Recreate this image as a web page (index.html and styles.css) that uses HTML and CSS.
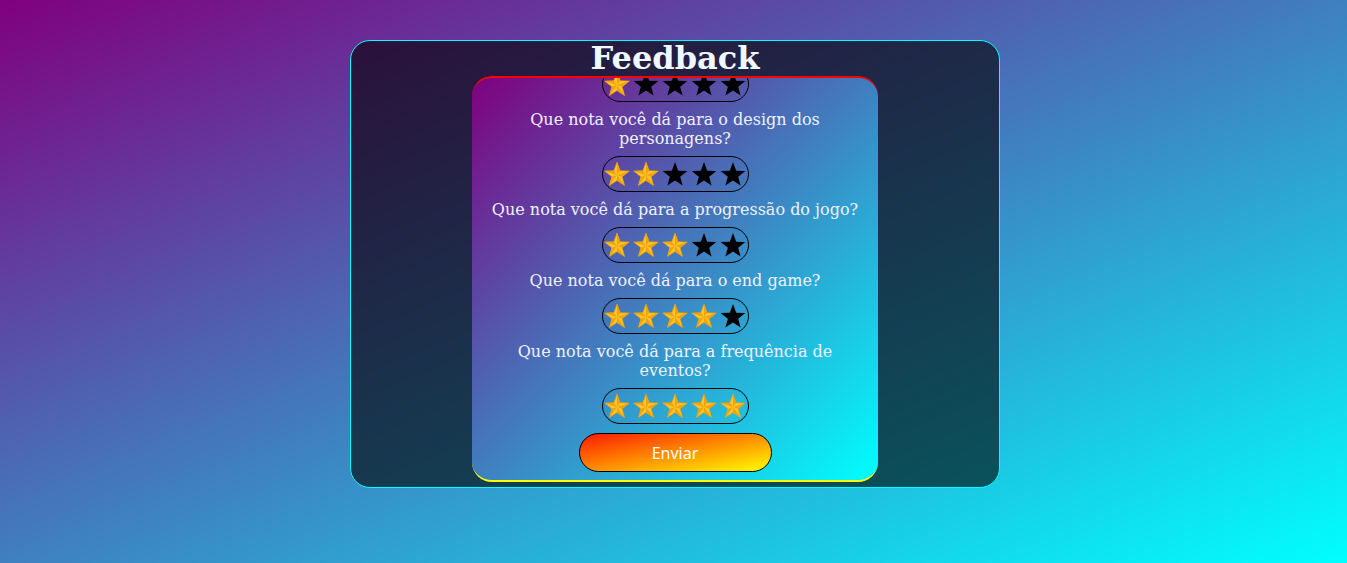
FILE: index.html
```html
<!DOCTYPE html>
<html lang="pt-BR">
<head>
<meta charset="utf-8">
<title>Feedback</title>
<link rel="stylesheet" href="styles.css">
</head>
<body>
<svg class="defs" width="0" height="0" aria-hidden="true">
  <defs>
    <symbol id="gold" viewBox="0 0 24 24">
      <polygon points="12,1 14.94,8.95 23.41,9.29 16.76,14.55 19.05,22.71 12,18 4.95,22.71 7.24,14.55 0.59,9.29 9.06,8.95" fill="#ffc62b" stroke="#e89a00" stroke-width="0.6" stroke-linejoin="round"/>
      <g fill="#f2a30c">
        <polygon points="12,13 12,1 14.94,8.95"/>
        <polygon points="12,13 23.41,9.29 16.76,14.55"/>
        <polygon points="12,13 19.05,22.71 12,18"/>
        <polygon points="12,13 4.95,22.71 7.24,14.55"/>
        <polygon points="12,13 0.59,9.29 9.06,8.95"/>
      </g>
    </symbol>
    <symbol id="dark" viewBox="0 0 24 24">
      <polygon points="12,1 14.94,8.95 23.41,9.29 16.76,14.55 19.05,22.71 12,18 4.95,22.71 7.24,14.55 0.59,9.29 9.06,8.95" fill="#000"/>
    </symbol>
  </defs>
</svg>
<main class="panel">
  <h1 class="title">Feedback</h1>
  <form class="card">
    <div class="rating">
      <svg class="star"><use href="#gold"/></svg>
      <svg class="star"><use href="#dark"/></svg>
      <svg class="star"><use href="#dark"/></svg>
      <svg class="star"><use href="#dark"/></svg>
      <svg class="star"><use href="#dark"/></svg>
    </div>
    <p class="question">Que nota você dá para o design dos personagens?</p>
    <div class="rating">
      <svg class="star"><use href="#gold"/></svg>
      <svg class="star"><use href="#gold"/></svg>
      <svg class="star"><use href="#dark"/></svg>
      <svg class="star"><use href="#dark"/></svg>
      <svg class="star"><use href="#dark"/></svg>
    </div>
    <p class="question">Que nota você dá para a progressão do jogo?</p>
    <div class="rating">
      <svg class="star"><use href="#gold"/></svg>
      <svg class="star"><use href="#gold"/></svg>
      <svg class="star"><use href="#gold"/></svg>
      <svg class="star"><use href="#dark"/></svg>
      <svg class="star"><use href="#dark"/></svg>
    </div>
    <p class="question">Que nota você dá para o end game?</p>
    <div class="rating">
      <svg class="star"><use href="#gold"/></svg>
      <svg class="star"><use href="#gold"/></svg>
      <svg class="star"><use href="#gold"/></svg>
      <svg class="star"><use href="#gold"/></svg>
      <svg class="star"><use href="#dark"/></svg>
    </div>
    <p class="question">Que nota você dá para a frequência de eventos?</p>
    <div class="rating">
      <svg class="star"><use href="#gold"/></svg>
      <svg class="star"><use href="#gold"/></svg>
      <svg class="star"><use href="#gold"/></svg>
      <svg class="star"><use href="#gold"/></svg>
      <svg class="star"><use href="#gold"/></svg>
    </div>
    <button type="button" class="send">Enviar</button>
  </form>
</main>
</body>
</html>
```
FILE: styles.css
```css
html, body {
  height: 100%;
}
body {
  margin: 0;
  box-sizing: border-box;
  padding: 40px 0 0 3px;
  background: linear-gradient(to bottom right, #800080, #00ffff);
  font-family: "DejaVu Serif", serif;
  overflow: hidden;
}
.defs {
  position: absolute;
  width: 0;
  height: 0;
}
.panel {
  width: 650px;
  height: 448px;
  box-sizing: border-box;
  margin: 0 auto;
  border: 1px solid #00ffff;
  border-radius: 20px;
  background: rgba(0, 0, 0, 0.6);
  display: flex;
  flex-direction: column;
  align-items: center;
}
.title {
  margin: 0;
  font: bold 32px/35px "DejaVu Serif", serif;
  color: #f0f8ff;
}
.card {
  width: 406px;
  height: 406px;
  box-sizing: border-box;
  border-top: 2px solid #ff0000;
  border-bottom: 2px solid #ffff00;
  border-radius: 20px;
  background: linear-gradient(to bottom right, #800080, #00ffff);
  display: flex;
  flex-direction: column;
  align-items: center;
  justify-content: flex-end;
  gap: 8px;
  padding: 0 15px 8px;
  overflow: hidden;
}
.question {
  margin: 0;
  font: 16px/19px "DejaVu Serif", serif;
  color: #eef2ff;
  text-align: center;
  flex-shrink: 0;
}
.rating {
  flex-shrink: 0;
  width: 147px;
  height: 36px;
  box-sizing: border-box;
  border: 1px solid #000;
  border-radius: 18px;
  display: flex;
  align-items: center;
  justify-content: center;
  gap: 3px;
}
.star {
  width: 26px;
  height: 26px;
  display: block;
}
.send {
  flex-shrink: 0;
  width: 193px;
  height: 39px;
  margin-top: 1px;
  border: 1px solid #000;
  border-radius: 20px;
  background: linear-gradient(to bottom right, #ff1a00, #ffff00);
  color: #fff;
  font: 16px "Noto Sans", sans-serif;
  cursor: pointer;
}
```
